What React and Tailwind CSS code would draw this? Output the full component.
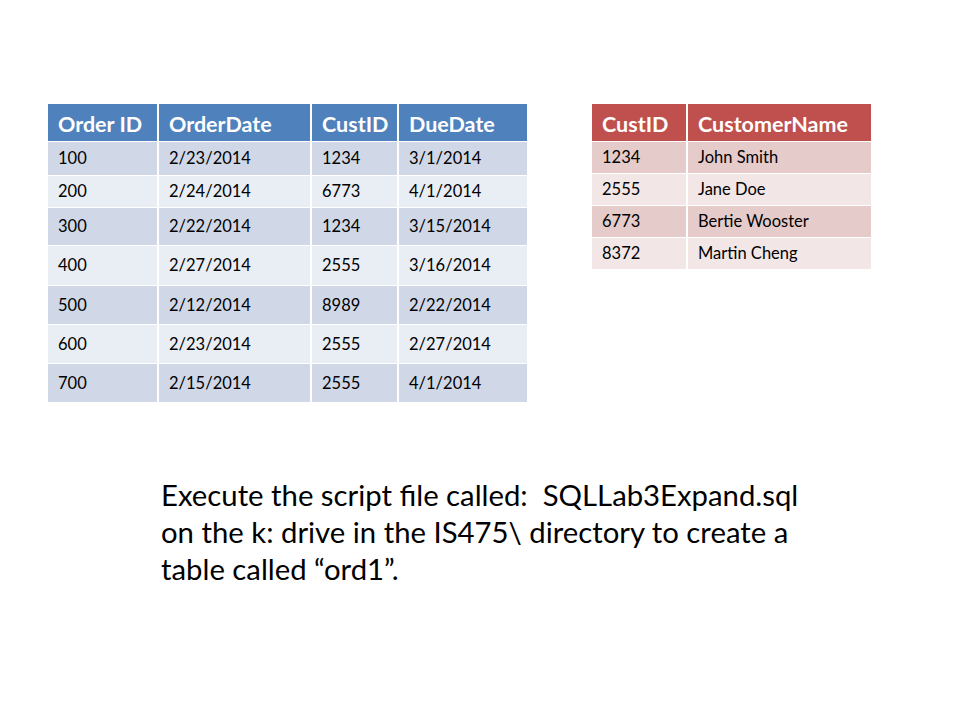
import React from 'react';

const orders = [
  { id: '100', date: '2/23/2014', cust: '1234', due: '3/1/2014', h: 'h-[33px]' },
  { id: '200', date: '2/24/2014', cust: '6773', due: '4/1/2014', h: 'h-[31px]' },
  { id: '300', date: '2/22/2014', cust: '1234', due: '3/15/2014', h: 'h-[37px]' },
  { id: '400', date: '2/27/2014', cust: '2555', due: '3/16/2014', h: 'h-[39px]' },
  { id: '500', date: '2/12/2014', cust: '8989', due: '2/22/2014', h: 'h-[38px]' },
  { id: '600', date: '2/23/2014', cust: '2555', due: '2/27/2014', h: 'h-[38px]' },
  { id: '700', date: '2/15/2014', cust: '2555', due: '4/1/2014', h: 'h-[38px]' },
];

const customers = [
  { id: '1234', name: 'John Smith' },
  { id: '2555', name: 'Jane Doe' },
  { id: '6773', name: 'Bertie Wooster' },
  { id: '8372', name: 'Martin Cheng' },
];

const font = { fontFamily: 'Lato, "Open Sans", sans-serif' };

const App = () => {
  return (
    <div className="w-[960px] h-[720px] bg-white text-black" style={font}>
      <div className="flex items-start pt-[104px] pl-[48px]">
        {/* orders table */}
        <div className="grid grid-cols-[109px_151px_85px_128px] gap-x-[2px] gap-y-[1px]">
          {['Order ID', 'OrderDate', 'CustID', 'DueDate'].map(h => (
            <div key={h} className="h-[37px] pt-[3px] bg-[#4f81bd] text-white font-bold text-[21.5px] flex items-center pl-[10px] whitespace-nowrap">
              {h}
            </div>
          ))}
          {orders.map((o, i) => (
            [o.id, o.date, o.cust, o.due].map((v, j) => (
              <div
                key={`${i}-${j}`}
                className={`${o.h} ${i % 2 === 0 ? 'bg-[#d0d8e8]' : 'bg-[#e9edf4]'} text-[16.5px] flex items-center pl-[10px] whitespace-nowrap`}>
                {v}
              </div>
            ))
          ))}
        </div>

        {/* customers table */}
        <div className="ml-[65px] grid grid-cols-[94px_183px] gap-x-[2px] gap-y-[1px]">
          {['CustID', 'CustomerName'].map(h => (
            <div key={h} className="h-[37px] pt-[3px] bg-[#c0504d] text-white font-bold text-[21.5px] flex items-center pl-[10px] whitespace-nowrap">
              {h}
            </div>
          ))}
          {customers.map((c, i) => (
            [c.id, c.name].map((v, j) => (
              <div
                key={`${i}-${j}`}
                className={`h-[31px] ${i % 2 === 0 ? 'bg-[#e6cbcb]' : 'bg-[#f2e6e6]'} text-[16.5px] flex items-center pl-[10px] whitespace-nowrap`}>
                {v}
              </div>
            ))
          ))}
        </div>
      </div>

      <div className="mt-[74px] ml-[161px] text-[29.3px] leading-[37px]">
        <div className="whitespace-nowrap">Execute the script file called:&nbsp; SQLLab3Expand.sql</div>
        <div className="whitespace-nowrap">on the k: drive in the IS475\ directory to create a</div>
        <div className="whitespace-nowrap">table called “ord1”.</div>
      </div>
    </div>
  );
};

export default App;
